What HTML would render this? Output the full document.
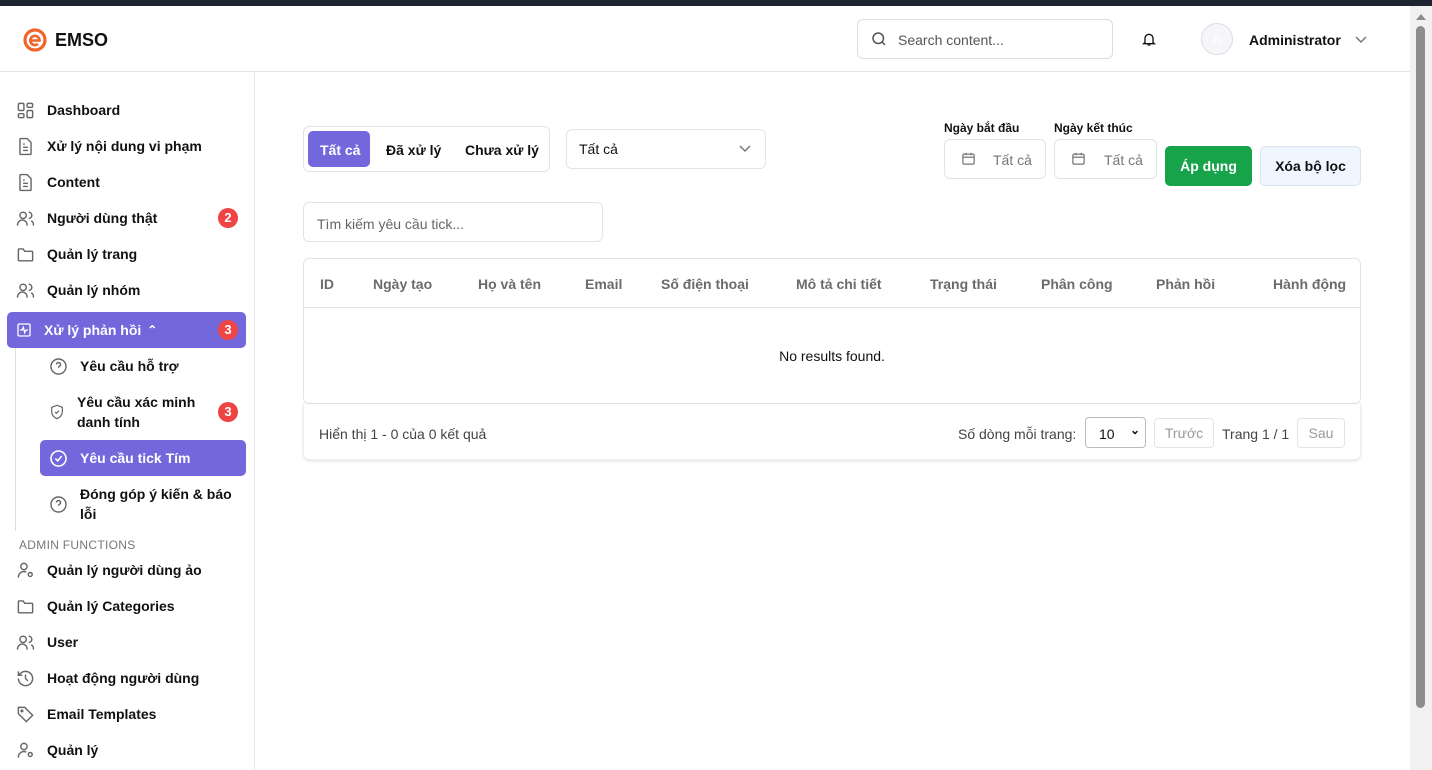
<!DOCTYPE html>
<html><head><meta charset="utf-8"><style>
*{box-sizing:border-box;margin:0;padding:0}
body{width:1432px;height:770px;overflow:hidden;background:#fff;font-family:"Liberation Sans","Noto Sans CJK SC",sans-serif;color:#111;position:relative}
.topbar{position:absolute;left:0;top:0;width:1432px;height:6px;background:#1f2433}
.sb{position:absolute;right:0;top:6px;width:22px;height:764px;background:#f1f1f1}
.sb .th{position:absolute;left:6px;top:20px;width:9px;height:682px;background:#8d8d8d;border-radius:5px}
.sb .up{position:absolute;left:6px;top:8px;width:0;height:0;border-left:5px solid transparent;border-right:5px solid transparent;border-bottom:6px solid #8d8d8d}
.header{position:absolute;left:0;top:6px;width:1410px;height:66px;border-bottom:1px solid #e5e5e5;background:#fff}
.logo{position:absolute;left:23px;top:22px;display:flex;align-items:center;gap:8px;font-size:18px;font-weight:600}
.search{position:absolute;left:857px;top:13px;width:256px;height:40px;border:1px solid #ddd;border-radius:6px;font-size:14px;color:#555;padding:12px 0 0 40px}
.search svg{position:absolute;left:12px;top:10px}
.bell{position:absolute;left:1141px;top:25px}
.avatar{position:absolute;left:1201px;top:17px;width:32px;height:32px;border-radius:50%;border:1px solid #ddd;background:#f6f6fa;color:#fff;font-size:12px;text-align:center;line-height:30px}
.admin{position:absolute;left:1249px;top:26px;font-size:14px;font-weight:600}
.chev{position:absolute;left:1355px;top:30px}
.side{position:absolute;left:0;top:72px;width:255px;height:698px;border-right:1px solid #e5e5e5}
.it{position:absolute;left:16px;display:flex;align-items:center;font-size:14px;font-weight:600;color:#111;height:20px}
.it svg{margin-right:12px;flex:none}
.badge{position:absolute;width:20px;height:20px;border-radius:50%;background:#ef4444;color:#fff;font-size:13px;font-weight:700;text-align:center;line-height:20px}
.act{position:absolute;background:#7367dc;border-radius:5px}
.main input{font-family:inherit}
.box{position:absolute;border:1px solid #e3e3e3;border-radius:6px;background:#fff}
.lbl{position:absolute;font-size:12px;font-weight:600}
.th2{position:absolute;top:276px;font-size:14px;color:#6b6b6b;font-weight:600}
</style></head><body>
<div class="topbar"></div>
<div class="header">
 <div class="logo"><svg width="24" height="24" viewBox="0 0 24 24"><circle cx="12" cy="12" r="10" fill="none" stroke="#f0632a" stroke-width="3.2"/><path d="M7.5 12.5h9a4.6 4.6 0 1 0-1.6 3.4" fill="none" stroke="#f0632a" stroke-width="2.6"/></svg>EMSO</div>
 <div class="search"><svg width="18" height="18" viewBox="0 0 24 24" fill="none" stroke="#555" stroke-width="2"><circle cx="11" cy="11" r="7"/><path d="M20 20l-4-4"/></svg>Search content...</div>
 <svg class="bell" width="16" height="16" viewBox="0 0 24 24" fill="none" stroke="#111" stroke-width="2"><path d="M6 17V11a6 6 0 0 1 12 0v6l2 2H4z"/><path d="M10 21h4"/></svg>
 <div class="avatar">A</div>
 <div class="admin">Administrator</div>
 <svg class="chev" width="12" height="8" viewBox="0 0 12 8" fill="none" stroke="#777" stroke-width="1.5"><path d="M1 1l5 5 5-5"/></svg>
</div>
<div class="sb"><div class="up"></div><div class="th"></div></div>
<div class="side">
 <div class="it" style="top:28px"><svg width="19" height="19" viewBox="0 0 24 24" fill="none" stroke="#666" stroke-width="1.8"><rect x="3" y="3" width="7" height="9" rx="1.5"/><rect x="14" y="3" width="7" height="5" rx="1.5"/><rect x="14" y="12" width="7" height="9" rx="1.5"/><rect x="3" y="16" width="7" height="5" rx="1.5"/></svg>Dashboard</div>
 <div class="it" style="top:64px"><svg width="19" height="19" viewBox="0 0 24 24" fill="none" stroke="#666" stroke-width="1.8"><path d="M6 2h8l5 5v14a1 1 0 0 1-1 1H6a1 1 0 0 1-1-1V3a1 1 0 0 1 1-1z"/><path d="M9 13h6M9 17h6M9 9h2"/></svg>Xử lý nội dung vi phạm</div>
 <div class="it" style="top:100px"><svg width="19" height="19" viewBox="0 0 24 24" fill="none" stroke="#666" stroke-width="1.8"><path d="M6 2h8l5 5v14a1 1 0 0 1-1 1H6a1 1 0 0 1-1-1V3a1 1 0 0 1 1-1z"/><path d="M9 13h6M9 17h6M9 9h2"/></svg>Content</div>
 <div class="it" style="top:136px"><svg width="19" height="19" viewBox="0 0 24 24" fill="none" stroke="#666" stroke-width="1.8"><circle cx="9" cy="8" r="4"/><path d="M2 21v-1a6 6 0 0 1 12 0v1M16 4a4 4 0 0 1 0 8M19 15a5 5 0 0 1 3 5v1"/></svg>Người dùng thật</div>
 <div class="badge" style="left:218px;top:136px">2</div>
 <div class="it" style="top:172px"><svg width="19" height="19" viewBox="0 0 24 24" fill="none" stroke="#666" stroke-width="1.8"><path d="M3 6a1 1 0 0 1 1-1h5l2 3h9a1 1 0 0 1 1 1v10a1 1 0 0 1-1 1H4a1 1 0 0 1-1-1z"/></svg>Quản lý trang</div>
 <div class="it" style="top:208px"><svg width="19" height="19" viewBox="0 0 24 24" fill="none" stroke="#666" stroke-width="1.8"><circle cx="9" cy="8" r="4"/><path d="M2 21v-1a6 6 0 0 1 12 0v1M16 4a4 4 0 0 1 0 8M19 15a5 5 0 0 1 3 5v1"/></svg>Quản lý nhóm</div>
 <div class="act" style="left:7px;top:240px;width:239px;height:36px"></div>
 <div class="it" style="top:248px;color:#fff"><svg width="16" height="16" viewBox="0 0 24 24" fill="none" stroke="#fff" stroke-width="2"><rect x="3" y="3" width="18" height="18" rx="2"/><path d="M6 12h3l2-4 2 8 2-4h3"/></svg>Xử lý phản hồi <span style="margin-left:6px;font-size:12px">&#8963;</span></div>
 <div class="badge" style="left:218px;top:248px">3</div>
 <div style="position:absolute;left:15px;top:276px;width:1px;height:183px;background:#ddd"></div>
 <div class="it" style="top:284px;left:49px"><svg width="19" height="19" viewBox="0 0 24 24" fill="none" stroke="#666" stroke-width="1.8"><circle cx="12" cy="12" r="9.5"/><path d="M9.5 9.5a2.5 2.5 0 1 1 3.5 2.3c-.7.3-1 .9-1 1.7M12 17h.01"/></svg>Yêu cầu hỗ trợ</div>
 <div class="it" style="top:320px;left:49px;height:40px;line-height:20px"><svg width="16" height="16" viewBox="0 0 24 24" fill="none" stroke="#666" stroke-width="1.8"><path d="M12 2l8 3v6c0 5-3.5 9-8 11-4.5-2-8-6-8-11V5z"/><path d="M9 12l2 2 4-4"/></svg>Yêu cầu xác minh<br>danh tính</div>
 <div class="badge" style="left:218px;top:330px">3</div>
 <div class="act" style="left:40px;top:368px;width:206px;height:36px"></div>
 <div class="it" style="top:376px;left:49px;color:#fff"><svg width="19" height="19" viewBox="0 0 24 24" fill="none" stroke="#fff" stroke-width="2"><circle cx="12" cy="12" r="9.5"/><path d="M8 12l3 3 5-6"/></svg>Yêu cầu tick Tím</div>
 <div class="it" style="top:412px;left:49px;height:40px;line-height:20px"><svg width="19" height="19" viewBox="0 0 24 24" fill="none" stroke="#666" stroke-width="1.8"><circle cx="12" cy="12" r="9.5"/><path d="M9.5 9.5a2.5 2.5 0 1 1 3.5 2.3c-.7.3-1 .9-1 1.7M12 17h.01"/></svg>Đóng góp ý kiến &amp; báo<br>lỗi</div>
 <div style="position:absolute;left:19px;top:466px;font-size:12px;color:#777;letter-spacing:.3px">ADMIN FUNCTIONS</div>
 <div class="it" style="top:488px"><svg width="19" height="19" viewBox="0 0 24 24" fill="none" stroke="#666" stroke-width="1.8"><circle cx="10" cy="7" r="4"/><path d="M3 21v-1a7 7 0 0 1 10-6"/><circle cx="18" cy="17" r="2.5"/></svg>Quản lý người dùng ảo</div>
 <div class="it" style="top:524px"><svg width="19" height="19" viewBox="0 0 24 24" fill="none" stroke="#666" stroke-width="1.8"><path d="M3 6a1 1 0 0 1 1-1h5l2 3h9a1 1 0 0 1 1 1v10a1 1 0 0 1-1 1H4a1 1 0 0 1-1-1z"/></svg>Quản lý Categories</div>
 <div class="it" style="top:560px"><svg width="19" height="19" viewBox="0 0 24 24" fill="none" stroke="#666" stroke-width="1.8"><circle cx="9" cy="8" r="4"/><path d="M2 21v-1a6 6 0 0 1 12 0v1M16 4a4 4 0 0 1 0 8M19 15a5 5 0 0 1 3 5v1"/></svg>User</div>
 <div class="it" style="top:596px"><svg width="19" height="19" viewBox="0 0 24 24" fill="none" stroke="#666" stroke-width="1.8"><path d="M3 12a9 9 0 1 0 3-6.7L3 8"/><path d="M3 3v5h5M12 7v5l3 3"/></svg>Hoạt động người dùng</div>
 <div class="it" style="top:632px"><svg width="19" height="19" viewBox="0 0 24 24" fill="none" stroke="#666" stroke-width="1.8"><path d="M3 3h8l10 10-8 8L3 11z"/><circle cx="7.5" cy="7.5" r="1"/></svg>Email Templates</div>
 <div class="it" style="top:668px"><svg width="19" height="19" viewBox="0 0 24 24" fill="none" stroke="#666" stroke-width="1.8"><circle cx="10" cy="7" r="4"/><path d="M3 21v-1a7 7 0 0 1 10-6"/><circle cx="18" cy="17" r="2.5"/></svg>Quản lý</div>
</div>
<div class="main">
 <div class="box" style="left:303px;top:126px;width:247px;height:46px"></div>
 <div class="act" style="left:308px;top:131px;width:62px;height:36px"></div>
 <div style="position:absolute;left:320px;top:142px;font-size:14px;font-weight:600;color:#fff">Tất cả</div>
 <div style="position:absolute;left:386px;top:142px;font-size:14px;font-weight:600">Đã xử lý</div>
 <div style="position:absolute;left:465px;top:142px;font-size:14px;font-weight:600">Chưa xử lý</div>
 <div class="box" style="left:566px;top:129px;width:200px;height:40px"></div>
 <div style="position:absolute;left:579px;top:141px;font-size:14px">Tất cả</div>
 <svg style="position:absolute;left:739px;top:145px" width="12" height="8" viewBox="0 0 12 8" fill="none" stroke="#777" stroke-width="1.5"><path d="M1 1l5 5 5-5"/></svg>
 <div class="lbl" style="left:944px;top:121px">Ngày bắt đầu</div>
 <div class="lbl" style="left:1054px;top:121px">Ngày kết thúc</div>
 <div class="box" style="left:944px;top:139px;width:102px;height:40px;font-size:14px;color:#777;padding:12px 0 0 48px">Tất cả</div>
 <div class="box" style="left:1054px;top:139px;width:103px;height:40px;font-size:14px;color:#777;padding:12px 0 0 49px">Tất cả</div>
 <svg style="position:absolute;left:961px;top:151px" width="15" height="15" viewBox="0 0 24 24" fill="none" stroke="#777" stroke-width="2"><rect x="3" y="5" width="18" height="16" rx="2"/><path d="M3 10h18M8 3v4M16 3v4"/></svg>
 <svg style="position:absolute;left:1071px;top:151px" width="15" height="15" viewBox="0 0 24 24" fill="none" stroke="#777" stroke-width="2"><rect x="3" y="5" width="18" height="16" rx="2"/><path d="M3 10h18M8 3v4M16 3v4"/></svg>
 <div style="position:absolute;left:1165px;top:146px;width:87px;height:40px;background:#16a34a;border-radius:5px;color:#fff;font-size:14px;font-weight:600;text-align:center;line-height:40px">Áp dụng</div>
 <div style="position:absolute;left:1260px;top:146px;width:101px;height:40px;background:#eff6ff;border:1px solid #dde3ea;border-radius:5px;font-size:14px;font-weight:600;text-align:center;line-height:38px">Xóa bộ lọc</div>
 <div class="box" style="left:303px;top:202px;width:300px;height:40px;font-size:14px;color:#666;padding:13px 0 0 13px">Tìm kiếm yêu cầu tick...</div>
 <div class="box" style="left:303px;top:258px;width:1058px;height:146px"></div>
 <div style="position:absolute;left:304px;top:307px;width:1056px;height:1px;background:#e3e3e3"></div>
 <div class="th2" style="left:320px">ID</div>
 <div class="th2" style="left:373px">Ngày tạo</div>
 <div class="th2" style="left:478px">Họ và tên</div>
 <div class="th2" style="left:585px">Email</div>
 <div class="th2" style="left:661px">Số điện thoại</div>
 <div class="th2" style="left:796px">Mô tả chi tiết</div>
 <div class="th2" style="left:930px">Trạng thái</div>
 <div class="th2" style="left:1041px">Phân công</div>
 <div class="th2" style="left:1156px">Phản hồi</div>
 <div class="th2" style="left:1273px">Hành động</div>
 <div style="position:absolute;left:303px;top:348px;width:1058px;text-align:center;font-size:14px">No results found.</div>
 <div style="position:absolute;left:303px;top:404px;width:1058px;height:56px;border-radius:0 0 6px 6px;box-shadow:0 1px 3px rgba(0,0,0,.12);border:1px solid #eee;border-top:none"></div>
 <div style="position:absolute;left:319px;top:426px;font-size:14px;color:#444">Hiển thị 1 - 0 của 0 kết quả</div>
 <div style="position:absolute;left:958px;top:426px;font-size:14px;color:#444">Số dòng mỗi trang:</div>
 <div style="position:absolute;left:1085px;top:417px;width:61px;height:31px;border:1px solid #bbb;border-radius:4px;font-size:14px;padding:8px 0 0 13px">10<span style="position:absolute;left:44px;top:5px;font-size:12px;font-weight:700">&#8964;</span></div>
 <div style="position:absolute;left:1154px;top:418px;width:60px;height:30px;border:1px solid #e3e3e3;border-radius:4px;font-size:14px;color:#999;text-align:center;line-height:28px">Trước</div>
 <div style="position:absolute;left:1222px;top:426px;font-size:14px;color:#444">Trang 1 / 1</div>
 <div style="position:absolute;left:1297px;top:418px;width:48px;height:30px;border:1px solid #e3e3e3;border-radius:4px;font-size:14px;color:#999;text-align:center;line-height:28px">Sau</div>
</div>
</body></html>
